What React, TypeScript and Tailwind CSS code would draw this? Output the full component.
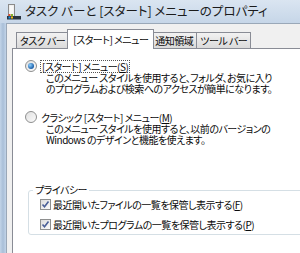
import React from 'react';

const jp = "font-['Noto_Sans_CJK_JP','Noto_Sans',sans-serif] [font-feature-settings:'palt']";

function TitleIcon() {
  return (
    <svg width="14" height="16" viewBox="0 0 14 16">
      <rect x="1.5" y="0.5" width="6" height="13" fill="#e8e8e8" stroke="#8a8a8a" />
      <rect x="2.5" y="1.5" width="4" height="11" fill="#f8f8f8" />
      <rect x="0" y="12" width="14" height="3.5" fill="#2a3440" />
      <rect x="1.5" y="10" width="2" height="2" fill="#e24b26" />
      <rect x="4" y="10" width="2" height="2" fill="#7cb82f" />
      <rect x="1.5" y="12.5" width="2" height="2" fill="#1e8fe0" />
      <rect x="4" y="12.5" width="2" height="2" fill="#f5b80e" />
    </svg>
  );
}

function Radio({ checked }: { checked?: boolean }) {
  return (
    <span className="w-[12px] h-[12px] rounded-full border border-[#8e8f8f] bg-gradient-to-br from-[#e0e0e0] to-[#fbfbfb] flex items-center justify-center shrink-0">
      {checked && (
        <span className="w-[6px] h-[6px] rounded-full bg-[radial-gradient(circle_at_35%_35%,#8fd1ff,#1a5ea8_70%)]" />
      )}
    </span>
  );
}

function Check() {
  return (
    <span className="w-[11px] h-[11px] border border-[#8e8f8f] bg-gradient-to-br from-[#dcdcdc] to-[#fbfbfb] flex items-center justify-center shrink-0">
      <svg width="9" height="9" viewBox="0 0 9 9">
        <path d="M1.5 4.5 L3.5 6.8 L7.5 1.5" fill="none" stroke="#4a5f97" strokeWidth="1.6" />
      </svg>
    </span>
  );
}

function Tab({ label, active }: { label: string; active?: boolean }) {
  if (active) {
    return (
      <div className="h-[20px] -mb-[1px] -mx-[2px] px-[5px] bg-white border border-b-0 border-[#898c95] flex items-center relative z-10">
        {label}
      </div>
    );
  }
  return (
    <div className="h-[16px] px-[3px] bg-gradient-to-b from-[#f2f2f2] to-[#dadada] border border-b-0 border-[#898c95] -ml-[1px] first:ml-0 flex items-center">
      {label}
    </div>
  );
}

export default function App() {
  return (
    <div className={`w-[300px] h-[253px] overflow-hidden flex flex-col bg-[#c9d8e9] text-[10px] tracking-[-0.5px] text-[#0a0a0a] ${jp}`}>
      {/* Title bar */}
      <div className="h-[23px] shrink-0 flex items-center gap-[4px] pl-[7px] bg-gradient-to-b from-[#dae5f1] to-[#c6d6e8]">
        <TitleIcon />
        <span className="text-[12.5px] tracking-normal text-[#1b1b1b] whitespace-nowrap leading-none">タスク バーと [スタート] メニューのプロパティ</span>
      </div>

      <div className="flex-1 flex min-h-0">
        <div className="w-[6px] shrink-0 bg-gradient-to-r from-[#c2d4e8] via-[#a9bfd8] to-[#c2d4e8]" />
        <div className="flex-1 flex flex-col bg-[#f0f0f0] border-l border-t border-[#9aa8b8] pl-[5px] pt-[5px] min-w-0">
          {/* Tabs */}
          <div className="flex items-end pl-[4px] whitespace-nowrap leading-none">
            <Tab label="タスク バー" />
            <Tab label="[スタート] メニュー" active />
            <Tab label="通知領域" />
            <Tab label="ツール バー" />
          </div>

          {/* Panel */}
          <div className="flex-1 bg-white border-l border-t border-[#898c95] pt-[11px] pl-[12px] flex flex-col whitespace-nowrap">
            <div className="flex flex-col">
              <div className="h-[12px] flex items-center gap-[2px]">
                <Radio checked />
                <span className="ml-[1px] px-[1px] leading-[11px] border border-dotted border-[#555]">
                  [スタート] メニュー(<span className="underline">S</span>)
                </span>
              </div>
              <div className="pl-[21px] leading-[10.5px] pt-[1px]">
                <div>このメニュー スタイルを使用すると、フォルダ、お気に入り</div>
                <div>のプログラムおよび検索へのアクセスが簡単になります。</div>
              </div>
            </div>

            <div className="flex flex-col mt-[17px]">
              <div className="h-[12px] flex items-center gap-[3px]">
                <Radio />
                <span className="ml-[1px]">クラシック [スタート] メニュー(<span className="underline">M</span>)</span>
              </div>
              <div className="pl-[21px] leading-[10.5px] pt-[1px]">
                <div>このメニュー スタイルを使用すると、以前のバージョンの</div>
                <div>Windows のデザインと機能を使えます。</div>
              </div>
            </div>

            {/* Privacy group */}
            <div className="mt-[45px] ml-[3px] -mr-[4px] border border-[#d5dfe5] rounded-[3px] relative pt-[6px] pb-[3px] pl-[11px] flex flex-col gap-[6px]">
              <span className="absolute -top-[7px] left-[4px] px-[2px] bg-white leading-[12px]">プライバシー</span>
              <div className="h-[14px] flex items-center gap-[2px]">
                <Check />
                <span>最近開いたファイルの一覧を保管し表示する(<span className="underline">F</span>)</span>
              </div>
              <div className="h-[14px] flex items-center gap-[2px]">
                <Check />
                <span>最近開いたプログラムの一覧を保管し表示する(<span className="underline">P</span>)</span>
              </div>
            </div>
          </div>
        </div>
      </div>
    </div>
  );
}
